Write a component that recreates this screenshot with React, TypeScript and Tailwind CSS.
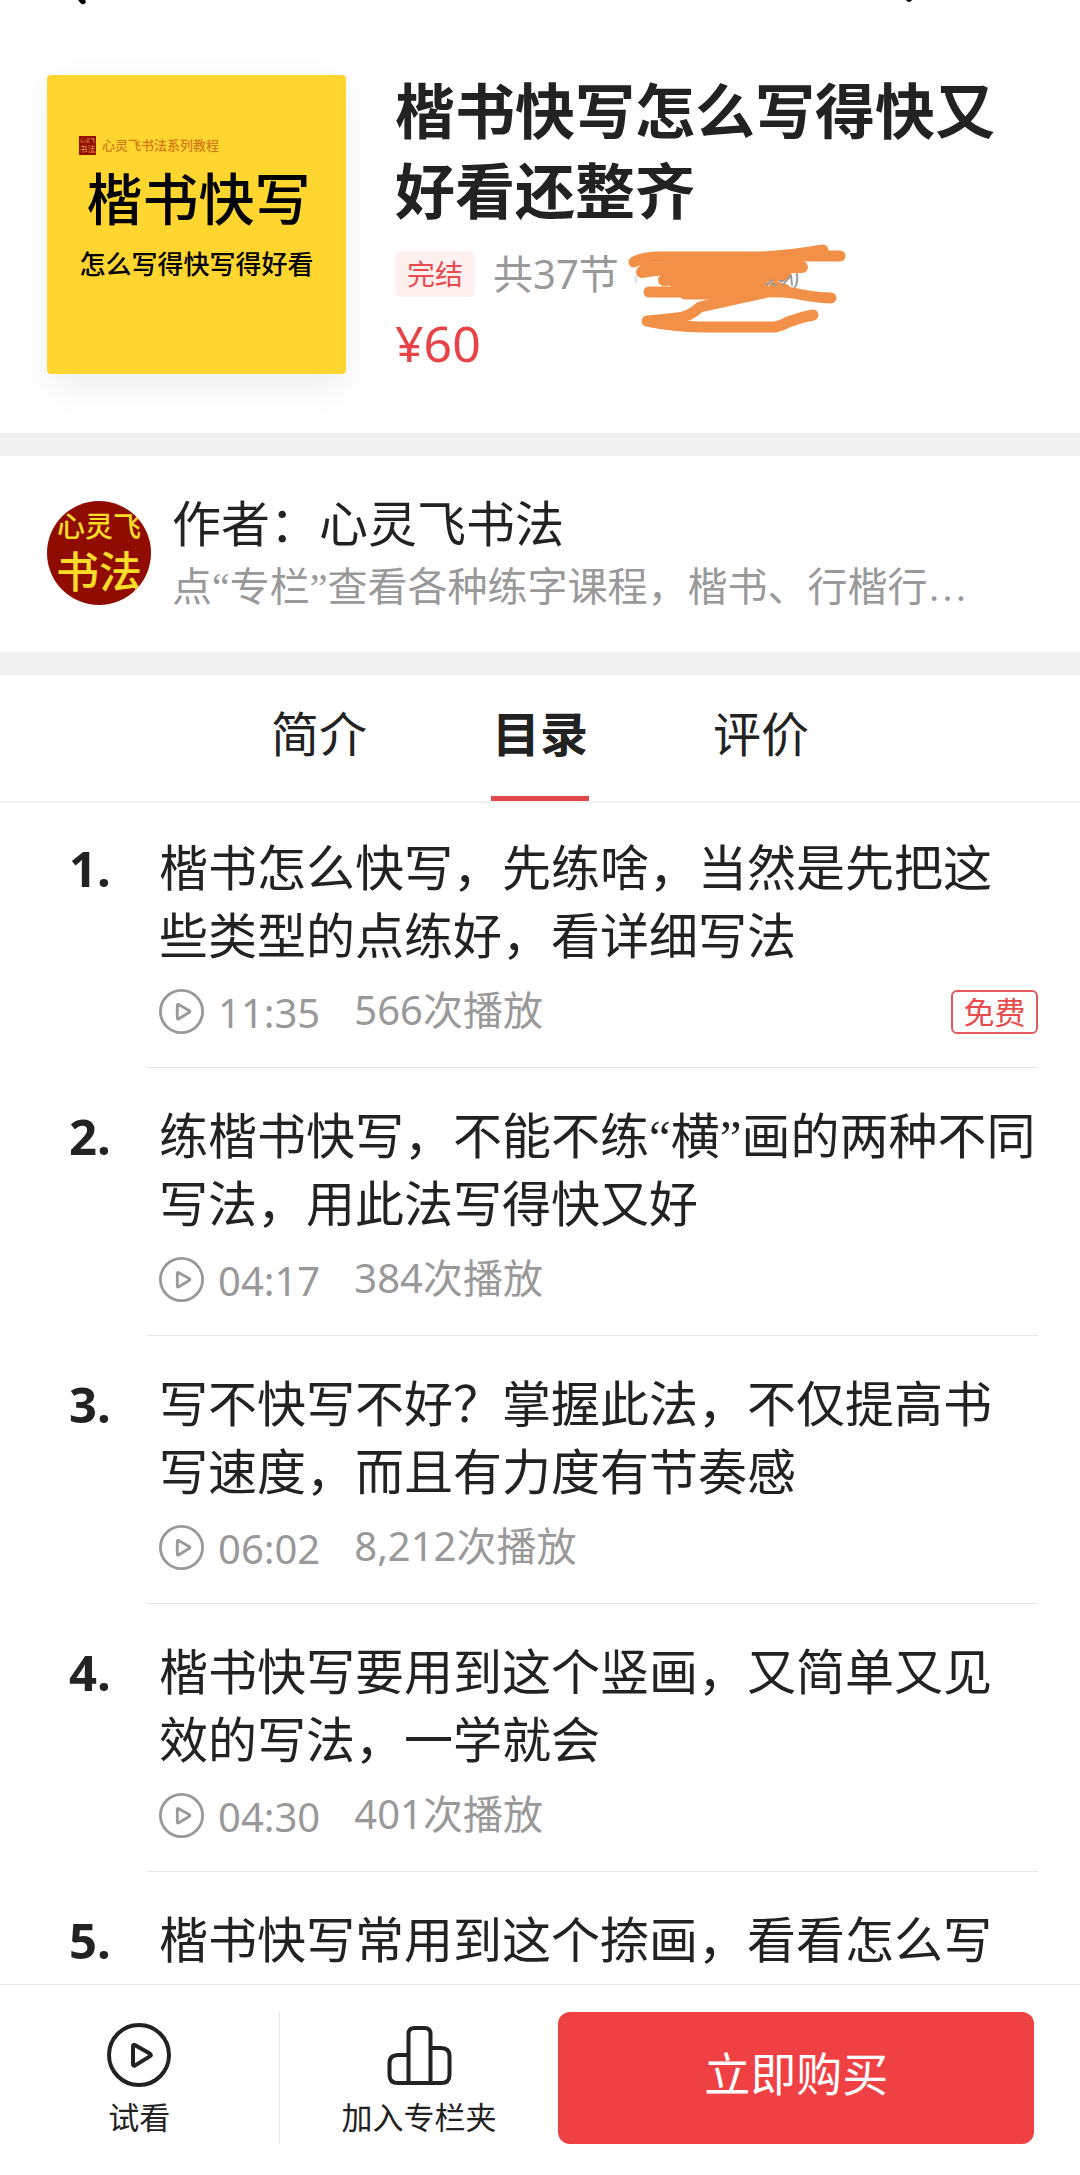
import React from "react";

type Lesson = {
  title: string;
  time?: string;
  plays?: string;
  free?: boolean;
};

const lessons: Lesson[] = [
  { title: "楷书怎么快写，先练啥，当然是先把这些类型的点练好，看详细写法", time: "11:35", plays: "566次播放", free: true },
  { title: "练楷书快写，不能不练“横”画的两种不同写法，用此法写得快又好", time: "04:17", plays: "384次播放" },
  { title: "写不快写不好？掌握此法，不仅提高书写速度，而且有力度有节奏感", time: "06:02", plays: "8,212次播放" },
  { title: "楷书快写要用到这个竖画，又简单又见效的写法，一学就会", time: "04:30", plays: "401次播放" },
  { title: "楷书快写常用到这个捺画，看看怎么写" },
];

const tabs = ["简介", "目录", "评价"];

function Prose({ text }: { text: string }) {
  return (
    <>
      {text.split(/([“”…])/).map((part, i) =>
        i % 2 === 1 ? (
          <span key={i} className="font-['Liberation_Serif',serif] leading-none">
            {part}
          </span>
        ) : (
          part
        ),
      )}
    </>
  );
}

function PlayIcon({ className, weight }: { className: string; weight: number }) {
  return (
    <svg viewBox="0 0 64 64" className={className} fill="none" stroke="currentColor" strokeWidth={weight} strokeLinejoin="round" aria-hidden="true">
      <circle cx="32" cy="32" r={32 - weight / 2} />
      <path d="M26 23.5Q26 21 28.2 22.2L42.8 30.6Q45 32 42.8 33.4L28.2 42.4Q26 43.6 26 41Z" />
    </svg>
  );
}

function ShelfIcon() {
  return (
    <svg viewBox="0 0 65 60" className="h-[60px] w-[65px]" fill="none" stroke="currentColor" strokeWidth="4" strokeLinejoin="round" aria-hidden="true">
      <path d="M21.5 58V9Q21.5 3 27.5 3H37.5Q43.5 3 43.5 9V58" />
      <path d="M21.5 30H11Q2.5 30 2.5 38V50Q2.5 58 11 58H54Q62.5 58 62.5 50V31Q62.5 23 54 23H43.5" />
    </svg>
  );
}

function Scribble() {
  return (
    <svg
      viewBox="0 0 224 94"
      className="absolute -top-[8px] left-[132px] h-[94px] w-[224px]"
      fill="none"
      stroke="#f29048"
      strokeWidth="12"
      strokeLinecap="round"
      strokeLinejoin="round"
      aria-hidden="true"
    >
      <path d="M11 40V32" stroke="#dfe7f7" strokeWidth="3" strokeLinecap="butt" />
      <path d="M9 19Q18 14 34 14H138Q170 12 198 7" strokeWidth="11" />
      <path d="M135 18L165 13H215" strokeWidth="11" />
      <path d="M17 29Q40 25 60 26L177 24" />
      <path d="M39 37L160 32" />
      <path d="M24 49H62Q112 49 138 42" strokeWidth="11" />
      <path d="M12 20L138 16L176 18L165 24L138 38L110 46L46 47L44 32L20 28Z" fill="#f29048" stroke="none" />
      <path d="M60 51L130 51Q145 47 168 50Q185 54 206 55" strokeWidth="11" />
      <path d="M150 44L160 47" />
      <path d="M138 50Q110 56 75 64Q64 74 52 75Q36 77 22 78Q46 83 74 84H150Q156 83 163 79Q176 74 188 72" strokeWidth="11" />
      <path d="M142 42L147 37M147 41L151 42M155 38H158M158 42L166 32L167 42M172 31Q173 40 170 44" stroke="#9a9a9a" strokeWidth="2" />
    </svg>
  );
}

function Cover() {
  return (
    <div className="flex h-[299px] w-[299px] shrink-0 flex-col items-center rounded bg-[#ffd52f] pt-[60px] text-black shadow-[0_12px_36px_rgba(0,0,0,0.07)]">
      <div className="flex h-5 w-full items-center gap-[6px] pl-8">
        <span className="flex h-[19px] w-[17px] flex-col items-center justify-center bg-[#930f06] text-[#e8a33a]">
          <span className="text-[5px] leading-[7px]">心灵飞</span>
          <span className="text-[8px] leading-[9px]">书法</span>
        </span>
        <span className="text-[13px] leading-5 font-medium text-[#d07a18]">心灵飞书法系列教程</span>
      </div>
      <div className="mt-2 pl-1 text-[56px] leading-[70px] font-medium">楷书快写</div>
      <div className="mt-4 text-[26px] leading-[30px] font-medium">怎么写得快写得好看</div>
    </div>
  );
}

function LessonRow({ lesson, index }: { lesson: Lesson; index: number }) {
  return (
    <li className="group flex pr-[42px] pl-[69px]">
      <span className="w-[78px] shrink-0 pt-[34px] text-[49px] leading-[68px] font-bold group-first:pt-[31px]">{index + 1}.</span>
      <div className="min-w-0 flex-1 border-b border-[#e6e6e6] pt-[33px] pb-[33px] pl-3 group-first:pt-[30px]">
        <h2 className="text-[49px] leading-[68px]">
          <Prose text={lesson.title} />
        </h2>
        {lesson.time && (
          <div className="mt-5 flex h-[45px] items-center text-[40px] leading-[45px] text-[#999]">
            <PlayIcon className="h-[45px] w-[45px]" weight={4} />
            <span className="ml-[14px] pt-[2px]">{lesson.time}</span>
            <span className="ml-[34px] pb-1">{lesson.plays}</span>
            {lesson.free && (
              <span className="ml-auto flex h-11 w-[87px] items-center justify-center rounded-md border-2 border-[#e2585b] text-[31px] leading-10 text-[#e84a4e]">
                免费
              </span>
            )}
          </div>
        )}
      </div>
    </li>
  );
}

export default function App() {
  return (
    <div className="flex h-dvh flex-col bg-white font-['Noto_Sans','Noto_Sans_CJK_SC',sans-serif] text-[#222]" lang="zh-CN">
      <main className="min-h-0 flex-1 overflow-y-auto [scrollbar-width:none]">
        <div className="flex h-[5px] justify-between pr-[168px] pl-[78px]" aria-hidden="true">
          <svg viewBox="0 0 8 5" className="h-[5px] w-2">
            <path d="M0 0H7Q9 3 6 4Q4 5 2.500 3Z" fill="#000" />
          </svg>
          <svg viewBox="0 0 6 5" className="h-[5px] w-[6px]">
            <path d="M0 0H6Q3 4 0 0Z" fill="#000" />
          </svg>
        </div>

        <section className="flex gap-[49px] px-[47px] pt-[66px] pb-[59px]">
          <div className="pt-1">
            <Cover />
          </div>
          <div className="min-w-0 flex-1">
            <h1 className="text-[60px] leading-[80px] font-bold">楷书快写怎么写得快又好看还整齐</h1>
            <div className="relative mt-5 flex h-[46px] items-center gap-[18px]">
              <span className="flex h-[46px] w-20 items-center justify-center rounded-md bg-[#fff0f0] text-[28px] leading-[46px] text-[#e84a4e]">完结</span>
              <div className="relative text-[40px] leading-[46px] text-[#999]">
                共37节
                <Scribble />
              </div>
            </div>
            <p className="mt-4 text-[50px] leading-[60px] text-[#e84448]">¥60</p>
          </div>
        </section>

        <div className="h-[23px] bg-[#f1f1f1]" />

        <section className="flex items-center gap-[21px] px-[47px] pt-[34px] pb-[36px]">
          <div className="flex h-[104px] w-[104px] shrink-0 flex-col items-center overflow-hidden rounded-full bg-[#900c00] text-[#fbdc26]">
            <span className="pt-2 text-[28px] leading-[34px] font-medium whitespace-nowrap">心灵飞</span>
            <span className="text-[43px] leading-[58px] font-medium whitespace-nowrap">书法</span>
          </div>
          <div className="min-w-0 flex-1">
            <h2 className="text-[49px] leading-[66px]">作者：心灵飞书法</h2>
            <p className="truncate text-[40px] leading-[60px] text-[#999]">
              <Prose text="点“专栏”查看各种练字课程，楷书、行楷行…" />
            </p>
          </div>
        </section>

        <div className="h-[23px] bg-[#f1f1f1]" />

        <div role="tablist" className="flex justify-center gap-[123px] border-b-2 border-[#f1f1f1]">
          {tabs.map((tab) => (
            <button
              key={tab}
              type="button"
              role="tab"
              aria-selected={tab === "目录"}
              className="h-[126px] w-[98px] border-b-[5px] border-transparent pb-1 text-[48px] leading-[60px] whitespace-nowrap aria-selected:border-[#e2484b] aria-selected:font-bold"
            >
              {tab}
            </button>
          ))}
        </div>

        <ol>
          {lessons.map((lesson, i) => (
            <LessonRow key={lesson.title} lesson={lesson} index={i} />
          ))}
        </ol>
      </main>

      <footer className="flex shrink-0 items-center border-t border-[#e6e6e6] bg-white pt-[27px] pr-[46px] pb-[31px]">
        <button type="button" className="flex h-[132px] flex-1 flex-col items-center border-r border-[#e6e6e6] pt-[11px] text-[31px] leading-10">
          <PlayIcon className="h-16 w-16" weight={4} />
          <span className="mt-[10px]">试看</span>
        </button>
        <button type="button" className="flex h-[132px] flex-1 flex-col items-center pt-[13px] text-[31px] leading-10">
          <ShelfIcon />
          <span className="mt-3">加入专栏夹</span>
        </button>
        <button type="button" className="h-[132px] w-[46%] rounded-xl bg-[#ef4043] pb-[10px] text-[46px] leading-[60px] text-white">
          立即购买
        </button>
      </footer>
    </div>
  );
}
